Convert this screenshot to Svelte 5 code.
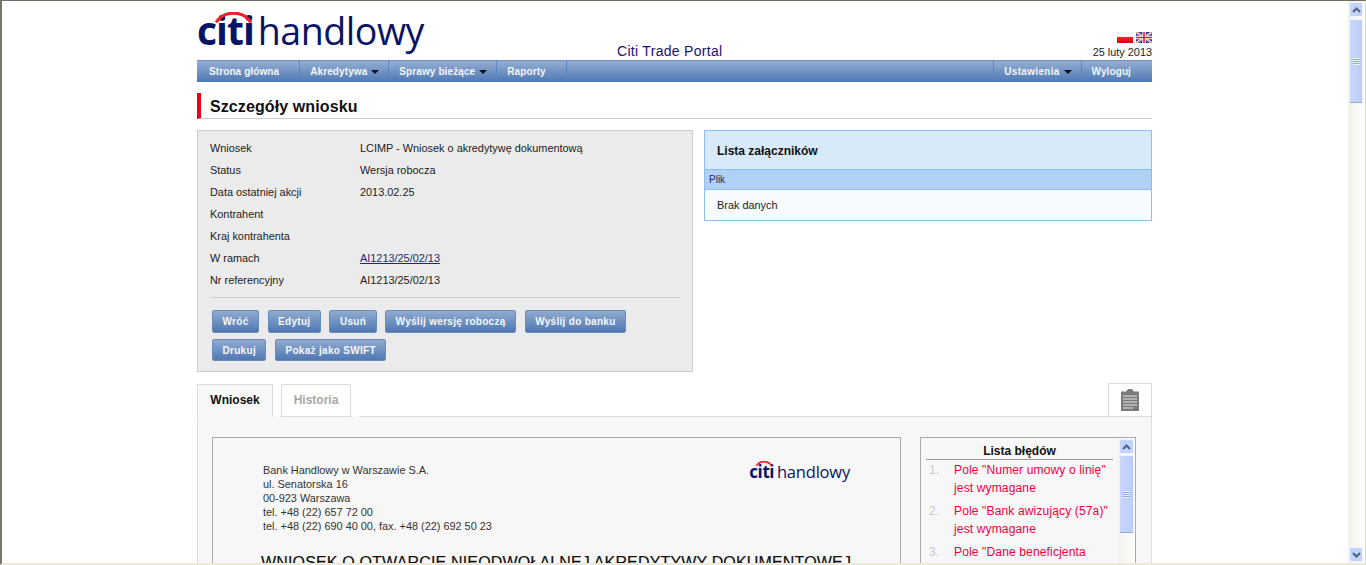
<script lang="ts">
  const details = [
    { label: 'Wniosek', value: 'LCIMP - Wniosek o akredytywę dokumentową' },
    { label: 'Status', value: 'Wersja robocza' },
    { label: 'Data ostatniej akcji', value: '2013.02.25' },
    { label: 'Kontrahent', value: '' },
    { label: 'Kraj kontrahenta', value: '' },
    { label: 'W ramach', value: 'AI1213/25/02/13', link: true },
    { label: 'Nr referencyjny', value: 'AI1213/25/02/13' }
  ];

  const navLeft = [
    { label: 'Strona główna', caret: false },
    { label: 'Akredytywa', caret: true },
    { label: 'Sprawy bieżące', caret: true },
    { label: 'Raporty', caret: false }
  ];

  const buttonRows = [
    ['Wróć', 'Edytuj', 'Usuń', 'Wyślij wersję roboczą', 'Wyślij do banku'],
    ['Drukuj', 'Pokaż jako SWIFT']
  ];

  const address = [
    'Bank Handlowy w Warszawie S.A.',
    'ul. Senatorska 16',
    '00-923 Warszawa',
    'tel. +48 (22) 657 72 00',
    'tel. +48 (22) 690 40 00, fax. +48 (22) 692 50 23'
  ];

  const errors = [
    ['Pole "Numer umowy o linię"', 'jest wymagane'],
    ['Pole "Bank awizujący (57a)"', 'jest wymagane'],
    ['Pole "Dane beneficjenta', 'jest wymagane']
  ];
</script>

<div class="window">
  <div class="viewport">
    <div class="page">
      <header class="head">
        <div class="logo">
          <svg class="arc" viewBox="0 0 37 11" width="37" height="11">
            <path d="M1 10.5C9-2 28-2 36 10.5" fill="none" stroke="#e8212b" stroke-width="3" />
          </svg>
          <span class="citi">citi</span>
          <span class="brand">handlowy</span>
        </div>
        <div class="portal">Citi Trade Portal</div>
        <div class="head-right">
          <div class="flags">
            <span class="flag-pl"></span>
            <svg class="flag-uk" viewBox="0 0 16 11" width="16" height="11">
              <rect width="16" height="11" fill="#2f3f8f" />
              <path d="M0 0l16 11M16 0L0 11" stroke="#fff" stroke-width="2" />
              <path d="M0 0l16 11M16 0L0 11" stroke="#d8304a" stroke-width=".7" />
              <path d="M8 0v11M0 5.5h16" stroke="#fff" stroke-width="3.4" />
              <path d="M8 0v11M0 5.5h16" stroke="#e0203a" stroke-width="1.6" />
            </svg>
          </div>
          <div class="date">25 luty 2013</div>
        </div>
      </header>

      <nav class="nav">
        {#each navLeft as item}
          <span class="nav-item" class:has-caret={item.caret}>{item.label}{#if item.caret}<i class="caret"></i>{/if}</span>
        {/each}
        <span class="nav-fill"></span>
        <span class="nav-item has-caret first-right">Ustawienia<i class="caret"></i></span>
        <span class="nav-item last">Wyloguj</span>
      </nav>

      <h1 class="title">Szczegóły wniosku</h1>

      <div class="columns">
        <section class="details">
          <div class="rows">
            {#each details as row}
              <div class="row">
                <span class="row-label">{row.label}</span>
                {#if row.link}
                  <a class="row-link" href="#top">{row.value}</a>
                {:else}
                  <span>{row.value}</span>
                {/if}
              </div>
            {/each}
          </div>
          <div class="actions">
            {#each buttonRows as buttons}
              <div class="action-row">
                {#each buttons as label}
                  <button class="btn">{label}</button>
                {/each}
              </div>
            {/each}
          </div>
        </section>

        <section class="attachments">
          <h2>Lista załączników</h2>
          <div class="att-head">Plik</div>
          <div class="att-body">Brak danych</div>
        </section>
      </div>

      <div class="tabs">
        <span class="tab active">Wniosek</span>
        <span class="tab">Historia</span>
        <span class="tab-fill"></span>
        <span class="tab-icon">
          <svg viewBox="0 0 18 22" width="18" height="22">
            <path d="M0 2.5h5.5V1.5L7.5 0h3l2 1.5v1H18V22H0z" fill="#7b7b7b" />
            <path d="M2 7h14M2 10h14M2 13h14M2 16h14M2 19h10" stroke="#e8e8e8" stroke-width="1" />
          </svg>
        </span>
      </div>

      <div class="tab-panel">
        <div class="doc">
          <div class="doc-top">
            <div class="address">
              {#each address as line}
                <div>{line}</div>
              {/each}
            </div>
            <div class="logo-small">
              <svg class="arc-small" viewBox="0 0 37 11" width="16" height="5">
                <path d="M1 10.5C9-2 28-2 36 10.5" fill="none" stroke="#e8212b" stroke-width="4" />
              </svg>
              <span class="citi-small">citi</span>
              <span class="brand-small">handlowy</span>
            </div>
          </div>
          <div class="doc-title">WNIOSEK O OTWARCIE NIEODWOŁALNEJ AKREDYTYWY DOKUMENTOWEJ</div>
        </div>

        <aside class="errors">
          <div class="errors-main">
            <div class="errors-title">Lista błędów</div>
            <ol>
              {#each errors as err, i}
                <li>
                  <span class="err-num">{i + 1}.</span>
                  <span class="err-text">{err[0]}<br />{err[1]}</span>
                </li>
              {/each}
            </ol>
          </div>
          <div class="sb sb-inner">
            <span class="sb-btn"><svg viewBox="0 0 9 6" width="9" height="6"><path d="M1 5l3.5-3.5L8 5" fill="none" stroke="#4d6185" stroke-width="2" /></svg></span>
            <span class="sb-thumb inner-thumb"><i class="grip"></i></span>
          </div>
        </aside>
      </div>
    </div>
  </div>

  <div class="sb sb-main">
    <span class="sb-btn"><svg viewBox="0 0 9 6" width="9" height="6"><path d="M1 5l3.5-3.5L8 5" fill="none" stroke="#4d6185" stroke-width="2" /></svg></span>
    <span class="sb-thumb main-thumb"><i class="grip"></i></span>
    <span class="sb-gap"></span>
    <span class="sb-btn"><svg viewBox="0 0 9 6" width="9" height="6"><path d="M1 1l3.5 3.5L8 1" fill="none" stroke="#4d6185" stroke-width="2" /></svg></span>
  </div>
</div>

<style>
  :global(body) {
    margin: 0;
    background: #fff;
    overflow: hidden;
  }

  .window {
    height: 565px;
    box-sizing: border-box;
    display: flex;
    border-top: 1px solid #716f64;
    border-left: 2px solid #77766a;
    border-right: 1px solid #d8d6c8;
    border-bottom: 2px solid #ece9d8;
    font-family: "Liberation Sans", Arial, sans-serif;
    font-size: 10.9px;
    color: #222;
  }

  .viewport {
    flex: 1;
    overflow: hidden;
  }

  .page {
    width: 955px;
    margin-left: 195px;
  }

  .head {
    height: 59px;
    display: flex;
    align-items: flex-end;
    position: relative;
  }

  .logo {
    width: 420px;
    height: 45px;
    align-self: flex-start;
    margin-top: 6px;
    color: #0a1464;
    white-space: nowrap;
    position: relative;
    line-height: 45px;
  }

  .arc {
    position: absolute;
    left: 18px;
    top: 5px;
  }

  .citi {
    font-family: "Open Sans", sans-serif;
    font-weight: 700;
    font-size: 39px;
    letter-spacing: -1px;
  }

  .brand {
    font-family: "Open Sans", sans-serif;
    font-size: 37.6px;
    letter-spacing: -0.5px;
    margin-left: 1px;
  }

  .portal {
    font-size: 14px;
    letter-spacing: 0.3px;
    color: #1a1272;
    padding-bottom: 1px;
  }

  .head-right {
    margin-left: auto;
    text-align: right;
    color: #222;
  }

  .flags {
    display: flex;
    justify-content: flex-end;
    gap: 3px;
    margin-bottom: 3px;
  }

  .flag-pl {
    width: 16px;
    height: 11px;
    background: linear-gradient(#f0f0f0, #fbfbfb 50%, #f4202a 50%, #d8000c);
  }

  .flag-uk {
    display: block;
  }

  .date {
    padding-bottom: 1px;
    line-height: 13px;
  }

  .nav {
    height: 22px;
    box-sizing: border-box;
    display: flex;
    border-top: 1px solid #7390b8;
    background: linear-gradient(#94aed3, #4e78b3);
    color: #f2f5fa;
    font-size: 10px;
    letter-spacing: 0.1px;
    font-weight: 700;
  }

  .nav-item {
    display: flex;
    align-items: center;
    padding: 0 20px 0 10px;
    border-right: 1px solid #5c86bd;
    white-space: nowrap;
  }

  .nav-item:first-child {
    padding-left: 12px;
  }

  .has-caret {
    padding-right: 9px;
  }

  .nav-fill {
    flex: 1;
  }

  .first-right {
    border-left: 1px solid #5c86bd;
    padding-left: 10px;
    letter-spacing: 0.3px;
  }

  .last {
    border-right: 0;
    padding-right: 21px;
    padding-left: 10px;
  }

  .caret {
    width: 0;
    height: 0;
    margin-left: 4px;
    border: 4px solid transparent;
    border-top: 4px solid #111;
    border-bottom: 0;
  }

  .title {
    margin: 11px 0 11px;
    height: 26px;
    box-sizing: border-box;
    border-left: 4px solid #f0000f;
    border-bottom: 1px solid #ccc;
    padding: 1px 0 0 9px;
    font-size: 16px;
    line-height: 26px;
    letter-spacing: 0.1px;
    font-weight: 700;
    color: #111;
  }

  .columns {
    display: flex;
    align-items: flex-start;
    gap: 11px;
  }

  .details {
    width: 496px;
    height: 242px;
    box-sizing: border-box;
    background: #ebebeb;
    border: 1px solid #ccc;
    padding: 6px 12px 0;
  }

  .rows {
    padding-bottom: 6px;
    border-bottom: 1px solid #ccc;
  }

  .row {
    display: flex;
    height: 22px;
    align-items: center;
  }

  .row-label {
    width: 150px;
  }

  .row-link {
    color: #1a2a78;
  }

  .actions {
    padding: 12px 0 0 2px;
    display: flex;
    flex-direction: column;
    gap: 6px;
  }

  .action-row {
    display: flex;
    gap: 8.5px;
  }

  .btn {
    height: 23px;
    padding: 0 9.5px;
    border: 1px solid #6a8cbb;
    border-radius: 2px;
    background: linear-gradient(#90abd0, #4f78b2);
    color: #f4f6fa;
    font: 700 10px "Liberation Sans", Arial, sans-serif;
    letter-spacing: 0.3px;
  }

  .action-row + .action-row .btn {
    height: 22px;
  }

  .attachments {
    width: 448px;
    box-sizing: border-box;
    border: 1px solid #8fbdee;
    background: #f7fbfe;
  }

  .attachments h2 {
    margin: 0;
    height: 38px;
    padding-left: 12px;
    background: #d8e9fa;
    font-size: 12px;
    line-height: 40px;
    color: #111;
    font-weight: 700;
  }

  .att-head {
    height: 21px;
    box-sizing: border-box;
    padding-left: 4px;
    line-height: 19px;
    background: #aed1f5;
    border-top: 1px solid #8fbdee;
    border-bottom: 1px solid #8fbdee;
    color: #1d2a5a;
    font-size: 10px;
  }

  .att-body {
    height: 30px;
    padding-left: 12px;
    line-height: 30px;
  }

  .tabs {
    display: flex;
    margin-top: 11px;
    height: 34px;
  }

  .tab {
    width: 70px;
    box-sizing: border-box;
    margin: 1px 8px 0 0;
    text-align: center;
    border: 1px solid #ddd;
    font-size: 12px;
    font-weight: 700;
    line-height: 31px;
    color: #a8a8a8;
  }

  .tab.active {
    width: 76px;
    background: #f7f7f7;
    border-bottom-color: #f7f7f7;
    color: #111;
  }

  .tab-fill {
    flex: 1;
    border-bottom: 1px solid #ddd;
  }

  .tab-icon {
    width: 44px;
    box-sizing: border-box;
    border: 1px solid #ddd;
    display: flex;
    align-items: center;
    justify-content: center;
  }

  .tab-panel {
    margin-top: -1px;
    height: 160px;
    box-sizing: border-box;
    border: 1px solid #ddd;
    border-top-color: transparent;
    background: #f7f7f7;
    display: flex;
    align-items: flex-start;
    padding: 20px 15px 0 14px;
    gap: 19px;
  }

  .doc {
    width: 689px;
    height: 200px;
    flex: none;
    box-sizing: border-box;
    border: 1px solid #aaa;
    padding: 21px 0 0 50px;
    overflow: hidden;
  }

  .doc-top {
    display: flex;
    justify-content: space-between;
    padding-right: 50px;
  }

  .address {
    margin-top: 4px;
    line-height: 14px;
    color: #333;
  }

  .logo-small {
    position: relative;
    color: #0a1464;
    white-space: nowrap;
    padding-top: 2px;
    line-height: 22px;
    font-size: 10px;
  }

  .arc-small {
    position: absolute;
    left: 7px;
    top: 2px;
  }

  .citi-small {
    font-family: "Open Sans", sans-serif;
    font-weight: 700;
    font-size: 17px;
    letter-spacing: -0.4px;
  }

  .brand-small {
    font-family: "Open Sans", sans-serif;
    font-size: 16.5px;
    letter-spacing: -0.2px;
  }

  .doc-title {
    margin: 21px 0 0 -2px;
    font-size: 16px;
    letter-spacing: 0.16px;
    -webkit-text-stroke: 0.2px #111;
    white-space: nowrap;
    color: #111;
  }

  .errors {
    width: 216px;
    height: 200px;
    flex: none;
    box-sizing: border-box;
    border: 1px solid #aaa;
    display: flex;
    overflow: hidden;
  }

  .errors-main {
    flex: 1;
    padding: 6px 5px 0;
  }

  .errors-title {
    text-align: center;
    font-size: 12px;
    font-weight: 700;
    color: #111;
    border-bottom: 1px solid #999;
    height: 15px;
    line-height: 15px;
  }

  ol {
    list-style: none;
    margin: 0;
    padding: 0;
  }

  li {
    display: flex;
    font-size: 12px;
    line-height: 18px;
    margin-top: 1px;
    padding-left: 3px;
  }

  li + li {
    margin-top: 5px;
  }

  .err-num {
    width: 25px;
    color: #c8c8d2;
  }

  .err-text {
    color: #f00040;
    white-space: nowrap;
    letter-spacing: 0.15px;
  }

  .sb {
    width: 17px;
    flex: none;
    display: flex;
    flex-direction: column;
    background: linear-gradient(90deg, #f3f1ec, #fefefb);
    box-sizing: border-box;
    padding: 1px;
  }

  .sb-main {
    width: 16px;
    margin-right: 1px;
  }

  .sb-btn {
    height: 15px;
    flex: none;
    box-sizing: border-box;
    border: 1px solid #eef3fe;
    border-radius: 2px;
    background: #c3d4fb;
    display: flex;
    align-items: center;
    justify-content: center;
  }

  .sb-thumb {
    flex: none;
    margin-top: 2px;
    box-sizing: border-box;
    border: 1px solid #eef3fe;
    border-bottom-color: #92a9da;
    border-radius: 2px;
    background: linear-gradient(90deg, #c9d8fc, #b9ccf8);
    display: flex;
    align-items: center;
    justify-content: center;
  }

  .main-thumb {
    height: 84px;
  }

  .inner-thumb {
    margin-top: 1px;
    height: 78px;
  }

  .sb-gap {
    flex: 1;
  }

  .grip {
    width: 7px;
    height: 7px;
    background: repeating-linear-gradient(#eef3fe 0 1px, #8ea9e0 1px 2px);
  }
</style>
